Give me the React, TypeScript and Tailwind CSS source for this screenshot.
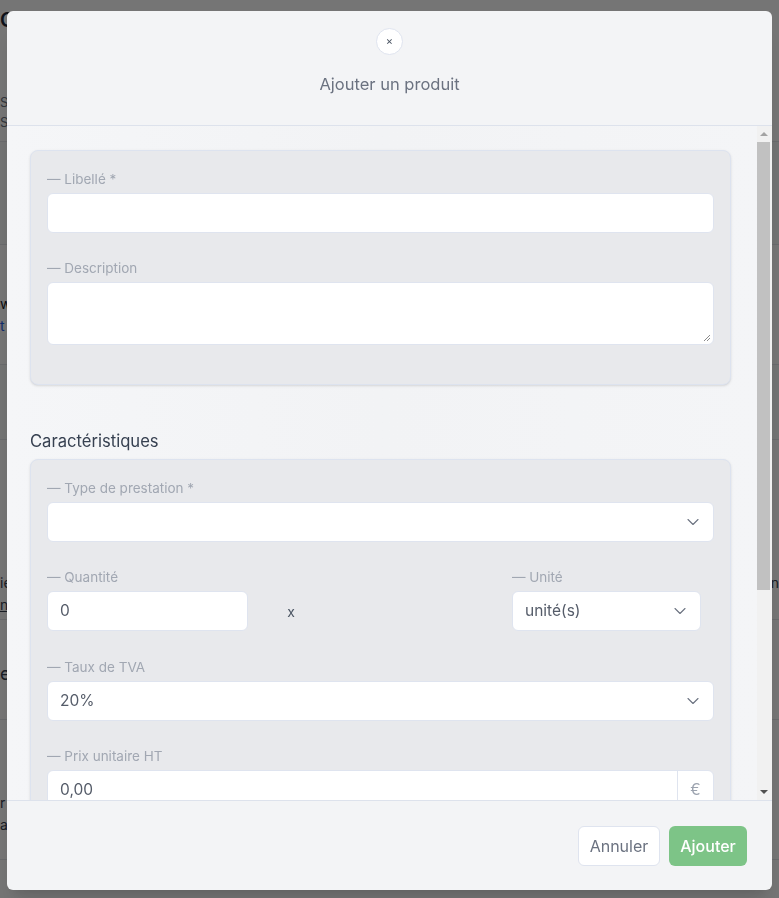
import React from 'react';
import { ChevronDown } from 'lucide-react';

// Page derrière la modale (seuls les bords restent visibles)
function BackgroundPage() {
  return (
    <div className="min-h-[898px] bg-white text-[#1f2937] font-['Inter',sans-serif]">
      <div className="h-[34px] px-0 pt-[8px] text-[20px] leading-[24px] font-semibold">Catalogue</div>
      <div className="h-[108px] border-b border-[#e5e7eb] pt-[58px] text-[13px] leading-[20px] text-[#6b7280]">
        <div>Services</div>
        <div>Stock</div>
      </div>
      <div className="h-[103px] border-b border-[#e5e7eb] bg-[#f9fafb]" />
      <div className="h-[120px] border-b border-[#e5e7eb] pt-[48px] text-[14px] leading-[22px] text-[#111827]">
        <div>w</div>
        <div className="text-[#2563eb]">t</div>
      </div>
      <div className="h-[75px] border-b border-[#e5e7eb] bg-[#f9fafb]" />
      <div className="h-[180px] border-b border-[#e5e7eb] pt-[132px] text-[14px] leading-[22px] text-[#374151]">
        <div className="flex justify-between">
          <span>ie</span>
          <span>n</span>
        </div>
        <div className="underline">n</div>
      </div>
      <div className="h-[100px] border-b border-[#e5e7eb] pt-[40px] text-[18px] text-[#374151]">e</div>
      <div className="h-[140px] border-b border-[#e5e7eb] pt-[72px] text-[14px] leading-[22px] text-[#374151]">
        <div>r</div>
        <div>a</div>
      </div>
    </div>
  );
}

function Label({ children }: { children: React.ReactNode }) {
  return <div className="mb-[5px] text-[13.5px] leading-[18px] text-[#a1a7b2]">— {children}</div>;
}

function SelectBox({ value, className = '' }: { value?: string; className?: string }) {
  return (
    <div className={`flex h-[40px] items-center justify-between rounded-md border border-[#dfe4ef] bg-white pl-[12px] pr-[10px] text-[15.5px] text-[#555c69] ${className}`}>
      <span>{value}</span>
      <ChevronDown size={20} strokeWidth={1.3} className="text-[#6b7280]" />
    </div>
  );
}

function TextInput({ value, className = '' }: { value?: string; className?: string }) {
  return (
    <div className={`flex h-[40px] items-center rounded-md border border-[#dfe4ef] bg-white px-[12px] text-[15.5px] text-[#555c69] ${className}`}>
      {value}
    </div>
  );
}

function Scrollbar() {
  return (
    <div className="flex w-[15px] flex-col bg-[#f1f1f1] pr-[2px]">
      <div className="flex h-[16px] items-center justify-center">
        <div className="h-0 w-0 border-x-[4px] border-b-[4px] border-x-transparent border-b-[#a3a3a3]" />
      </div>
      <div className="flex flex-1 flex-col">
        <div className="h-[448px] bg-[#c1c1c1]" />
        <div className="flex-1" />
      </div>
      <div className="flex h-[16px] items-center justify-center">
        <div className="h-0 w-0 border-x-[4px] border-t-[4px] border-x-transparent border-t-[#505050]" />
      </div>
    </div>
  );
}

export default function App() {
  return (
    <div className="relative h-[898px] w-[779px] overflow-hidden font-['Inter',sans-serif]">
      <BackgroundPage />
      <div className="fixed inset-0 bg-black/[0.54]" />

      {/* Modale */}
      <div className="fixed left-[7px] top-[11px] flex h-[879px] w-[765px] flex-col overflow-hidden rounded-md bg-[#f3f4f6] shadow-xl">
        <div className="flex h-[115px] flex-col items-center border-b border-[#dde2ec] pt-[17px]">
          <button className="flex h-[27px] w-[27px] items-center justify-center rounded-full border border-[#dfe4ef] bg-white text-[11px] leading-none text-[#4b5563]">
            ×
          </button>
          <h2 className="mt-[17px] text-[16.5px] leading-[24px] text-[#6b7280]">Ajouter un produit</h2>
        </div>

        <div className="flex h-[674px]">
          <div className="flex-1 overflow-hidden bg-gradient-to-r from-[#f5f6f8] via-[#f2f3f5] to-[#f4f5f7] pl-[23px] pr-[26px] pt-[24px]">
            <div className="rounded-lg border border-[#dde3ef] bg-[#e8e9ec] px-[16px] pb-[39px] pt-[19px] shadow-sm">
              <Label>Libellé *</Label>
              <TextInput />
              <div className="mt-[26px]">
                <Label>Description</Label>
                <div className="relative h-[63px] rounded-md border border-[#dfe4ef] bg-white">
                  <svg className="absolute bottom-[2px] right-[2px]" width="8" height="8" viewBox="0 0 8 8">
                    <path d="M7 1 L1 7 M7 4 L4 7" stroke="#8a8a8a" strokeWidth="1" />
                  </svg>
                </div>
              </div>
            </div>

            <h3 className="mt-[44px] text-[16.6px] leading-[24px] text-[#374151]">Caractéristiques</h3>

            <div className="mt-[6px] rounded-lg border border-[#dde3ef] bg-[#e8e9ec] px-[16px] pb-[30px] pt-[19px] shadow-sm">
              <Label>Type de prestation *</Label>
              <SelectBox />

              <div className="mt-[26px] flex items-end">
                <div className="w-[201px]">
                  <Label>Quantité</Label>
                  <TextInput value="0" />
                </div>
                <div className="flex h-[40px] w-[86px] items-center justify-center text-[14px] text-[#4b5563]">x</div>
                <div className="flex-1" />
                <div className="mr-[13px] w-[189px]">
                  <Label>Unité</Label>
                  <SelectBox value="unité(s)" />
                </div>
              </div>

              <div className="mt-[27px]">
                <Label>Taux de TVA</Label>
                <SelectBox value="20%" />
              </div>

              <div className="mt-[26px]">
                <Label>Prix unitaire HT</Label>
                <div className="flex h-[40px] rounded-md border border-[#dfe4ef] bg-white text-[15.5px] text-[#555c69]">
                  <div className="flex flex-1 items-center px-[12px]">0,00</div>
                  <div className="flex w-[36px] items-center justify-center border-l border-[#dfe4ef] text-[#9ca3af]">€</div>
                </div>
              </div>
            </div>
          </div>
          <Scrollbar />
        </div>

        <div className="flex flex-1 items-center justify-end gap-[9px] border-t border-[#dde2ec] pr-[25px]">
          <button className="h-[40px] w-[82px] rounded-md border border-[#dfe4ef] bg-white text-[16px] text-[#6b7280]">Annuler</button>
          <button className="h-[40px] w-[78px] rounded-md bg-[#7dc487] text-[16px] font-medium text-white">Ajouter</button>
        </div>
      </div>
    </div>
  );
}
